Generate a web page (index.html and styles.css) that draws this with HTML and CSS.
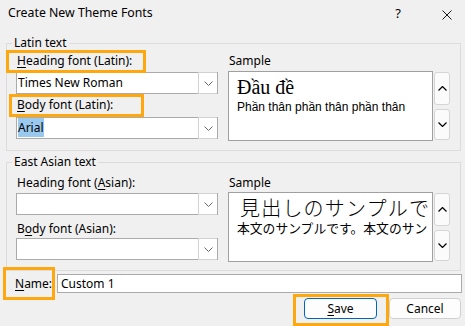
FILE: index.html
```html
<!DOCTYPE html>
<html>
<head>
    <title>Create New Theme Fonts</title>
    <link rel="stylesheet" href="styles.css">
</head>
<body>
<div class="dialog">
    <div class="titlebar">
        <span class="title">Create New Theme Fonts</span>
        <span class="help">?</span>
        <span class="close">
            <svg width="10" height="10" viewBox="0 0 10 10"><path d="M0.5 0.5L9.5 9.5M9.5 0.5L0.5 9.5" stroke="#1a1a1a" stroke-width="1" fill="none"/></svg>
        </span>
    </div>

    <fieldset class="group latin">
        <legend>Latin text</legend>
        <div class="cols">
            <div class="fields">
                <label class="lbl hl hl-head"><u>H</u>eading font (Latin):</label>
                <div class="combo">
                    <span class="val">Times New Roman</span>
                    <span class="drop"><svg width="9" height="5" viewBox="0 0 9 5"><path d="M0.5 0.5L4.5 4.5L8.5 0.5" stroke="#666" fill="none"/></svg></span>
                </div>
                <label class="lbl lbl-2 hl hl-body"><u>B</u>ody font (Latin):</label>
                <div class="combo">
                    <span class="val"><span class="sel">Arial</span></span>
                    <span class="drop"><svg width="9" height="5" viewBox="0 0 9 5"><path d="M0.5 0.5L4.5 4.5L8.5 0.5" stroke="#666" fill="none"/></svg></span>
                </div>
            </div>
            <div class="sample-col">
                <div class="lbl">Sample</div>
                <div class="sample-row">
                    <div class="sample">
                        <div class="s-head">Đầu đề</div>
                        <div class="s-body">Phần thân phần thân phần thân</div>
                    </div>
                    <div class="spin">
                        <span class="spin-btn up"><svg width="9" height="5" viewBox="0 0 9 5"><path d="M0.5 4.5L4.5 0.5L8.5 4.5" stroke="#000" stroke-width="1.2" fill="none"/></svg></span>
                        <span class="spin-btn down"><svg width="9" height="5" viewBox="0 0 9 5"><path d="M0.5 0.5L4.5 4.5L8.5 0.5" stroke="#000" stroke-width="1.2" fill="none"/></svg></span>
                    </div>
                </div>
            </div>
        </div>
    </fieldset>

    <fieldset class="group asian">
        <legend>East Asian text</legend>
        <div class="cols">
            <div class="fields">
                <label class="lbl">Heading font (<u>A</u>sian):</label>
                <div class="combo">
                    <span class="val"></span>
                    <span class="drop"><svg width="9" height="5" viewBox="0 0 9 5"><path d="M0.5 0.5L4.5 4.5L8.5 0.5" stroke="#666" fill="none"/></svg></span>
                </div>
                <label class="lbl lbl-2">B<u>o</u>dy font (Asian):</label>
                <div class="combo">
                    <span class="val"></span>
                    <span class="drop"><svg width="9" height="5" viewBox="0 0 9 5"><path d="M0.5 0.5L4.5 4.5L8.5 0.5" stroke="#666" fill="none"/></svg></span>
                </div>
            </div>
            <div class="sample-col">
                <div class="lbl">Sample</div>
                <div class="sample-row">
                    <div class="sample">
                        <div class="s-head jp">見出しのサンプルで</div>
                        <div class="s-body jp">本文のサンプルです。本文のサン</div>
                    </div>
                    <div class="spin">
                        <span class="spin-btn up"><svg width="9" height="5" viewBox="0 0 9 5"><path d="M0.5 4.5L4.5 0.5L8.5 4.5" stroke="#000" stroke-width="1.2" fill="none"/></svg></span>
                        <span class="spin-btn down"><svg width="9" height="5" viewBox="0 0 9 5"><path d="M0.5 0.5L4.5 4.5L8.5 0.5" stroke="#000" stroke-width="1.2" fill="none"/></svg></span>
                    </div>
                </div>
            </div>
        </div>
    </fieldset>

    <div class="name-row">
        <label class="name-lbl hl hl-name"><u>N</u>ame:</label>
        <div class="textbox">Custom 1</div>
    </div>

    <div class="actions">
        <span class="btn primary hl hl-save"><u>S</u>ave</span>
        <span class="btn">Cancel</span>
    </div>
</div>
</body>
</html>
```

FILE: styles.css
```css
html, body {
    margin: 0;
    padding: 0;
}
body {
    background: #f0f0f0;
    font-family: "Noto Sans", "Open Sans", sans-serif;
    font-size: 12px;
    color: #000;
    width: 465px;
    height: 326px;
    overflow: hidden;
}
u {
    text-decoration: underline;
    text-underline-offset: 2px;
}
.titlebar {
    display: flex;
    align-items: flex-start;
    height: 30px;
    padding: 5px 0 0 8px;
    box-sizing: border-box;
    line-height: 16px;
}
.title {
    flex: 1;
    font-size: 12.3px;
}
.help {
    margin-right: 41px;
    font-size: 13px;
}
.close {
    margin-right: 13px;
    padding-top: 3px;
}
.group {
    margin: 6px 4px 0 6px;
    padding: 0 10px 9px 9px;
    border: 1px solid #dcdcdc;
    min-width: 0;
}
.group legend {
    padding: 0 2px;
    margin-left: -4px;
    line-height: 14px;
}
.asian {
    margin-top: 4px;
    padding-bottom: 8px;
}
.cols {
    display: grid;
    grid-template-columns: 202px 1fr;
    column-gap: 10px;
}
.lbl {
    display: block;
    position: relative;
    height: 22px;
    line-height: 22px;
    padding-left: 1px;
}
.lbl-2 {
    height: 23px;
}
.asian .lbl {
    height: 24px;
    line-height: 16px;
    padding-top: 6px;
    box-sizing: border-box;
}
.asian .lbl-2 {
    height: 23px;
}
.combo {
    display: flex;
    height: 22px;
    border: 1px solid #ababab;
    background: #fff;
    box-sizing: border-box;
}
.combo .val {
    flex: 1;
    padding-left: 1px;
    line-height: 20px;
}
.combo .sel {
    background: #99c9ef;
    padding: 1px 0;
}
.combo .drop {
    width: 18px;
    border: 1px solid #d2d2d2;
    border-right: none;
    margin: -1px 0;
    display: flex;
    align-items: center;
    justify-content: center;
    background: #fff;
}
.sample-row {
    display: flex;
    margin-top: -1px;
}
.sample {
    width: 205px;
    height: 70px;
    border: 1px solid #a0a0a0;
    background: #fff;
    box-sizing: border-box;
    padding: 3px 0 0 8px;
    overflow: hidden;
    white-space: nowrap;
}
.s-head {
    font-family: "Liberation Serif", serif;
    font-size: 20px;
    line-height: 24px;
}
.s-body {
    font-family: "Liberation Sans", Arial, sans-serif;
    font-size: 12px;
    line-height: 16px;
}
.s-head.jp {
    font-family: "Noto Sans CJK JP", sans-serif;
    font-size: 20px;
    font-weight: 300;
    letter-spacing: 1.2px;
    line-height: 24px;
    padding-left: 3px;
}
.s-body.jp {
    font-family: "Noto Sans CJK JP", sans-serif;
    font-size: 12.8px;
    line-height: 15px;
}
.spin {
    display: flex;
    flex-direction: column;
    justify-content: space-between;
    margin-left: 1px;
    padding: 1px 0;
    height: 70px;
    box-sizing: border-box;
}
.spin-btn {
    width: 16px;
    border: 1px solid #d5d5d5;
    border-radius: 3px;
    background: #fbfbfb;
    box-sizing: border-box;
    display: flex;
    align-items: center;
    justify-content: center;
}
.spin-btn.up {
    height: 33px;
}
.spin-btn.down {
    height: 31px;
}
.name-row {
    display: flex;
    align-items: center;
    margin: 3px 3px 0 15px;
    height: 19px;
}
.name-lbl {
    position: relative;
    width: 42px;
}
.textbox {
    flex: 1;
    height: 19px;
    border: 1px solid #ababab;
    background: #fff;
    box-sizing: border-box;
    line-height: 17px;
    padding-left: 3px;
}
.actions {
    display: flex;
    justify-content: flex-end;
    gap: 12px;
    margin: 5px 4px 0 0;
}
.btn {
    position: relative;
    width: 72px;
    height: 21px;
    line-height: 19px;
    text-align: center;
    border: 1px solid #d0d0d0;
    border-radius: 4px;
    background: #fdfdfd;
    box-sizing: border-box;
}
.btn.primary {
    width: 73px;
    border-color: #0067c0;
}

/* orange call-out boxes drawn over the controls */
.hl::after {
    content: '';
    position: absolute;
    border: 3px solid #ffa70f;
    box-sizing: border-box;
    pointer-events: none;
}
.hl-head::after {
    left: -10px;
    top: 0;
    width: 140px;
    height: 23px;
}
.hl-body::after {
    left: -7px;
    top: 0;
    width: 135px;
    height: 23px;
}
.hl-name::after {
    left: -12px;
    top: -8px;
    width: 52px;
    height: 33px;
}
.hl-save::after {
    left: -12px;
    top: -5px;
    width: 96px;
    height: 32px;
}
```
